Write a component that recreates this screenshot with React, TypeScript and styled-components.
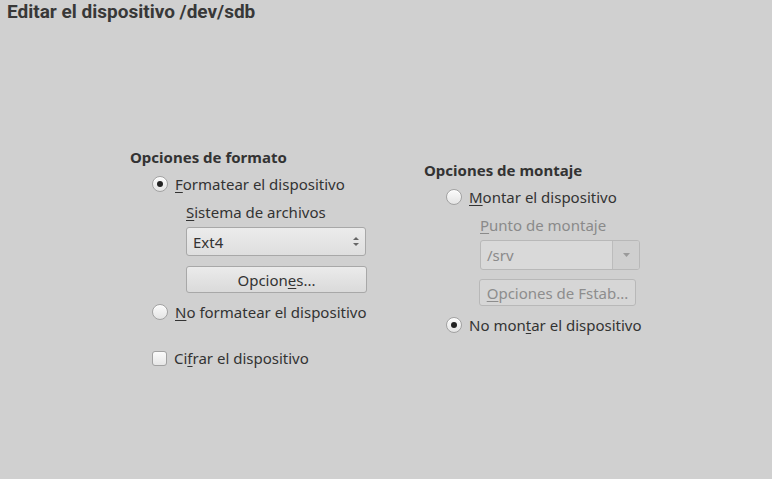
import React from "react";
import styled, { createGlobalStyle } from "styled-components";

const Global = createGlobalStyle`
  html, body { margin: 0; padding: 0; background: #d0d0d0; }
  body { font-family: "Noto Sans", "Open Sans", sans-serif; color: #333; }
`;

const Page = styled.div`
  width: 772px;
  height: 479px;
  background: #d0d0d0;
  box-sizing: border-box;
  padding: 0 7px 0;
  overflow: hidden;
`;

const Title = styled.h1`
  margin: 0;
  font-family: Roboto, "Liberation Sans", sans-serif;
  font-weight: 700;
  font-size: 19px;
  line-height: 23px;
  color: #383838;
`;

const Body = styled.div`
  display: flex;
  align-items: flex-start;
  padding-left: 123px;
  margin-top: 125px;
  gap: 58px;
`;

const Column = styled.div<{ $top: number; $width: number }>`
  display: flex;
  flex-direction: column;
  margin-top: ${(p) => p.$top}px;
  width: ${(p) => p.$width}px;
`;

const Heading = styled.div`
  font-weight: 700;
  font-size: 15px;
  line-height: 18px;
  color: #333;
  white-space: nowrap;
`;

const OptionRow = styled.label<{ $gap: number }>`
  display: flex;
  align-items: center;
  gap: 7px;
  height: 20px;
  margin-top: ${(p) => p.$gap}px;
  padding-left: 22px;
  font-size: 15px;
  color: #333;
  white-space: nowrap;
`;

const Radio = styled.span<{ $checked?: boolean }>`
  width: 14px;
  height: 14px;
  border-radius: 50%;
  border: 1px solid #a2a2a2;
  background: linear-gradient(#fbfbfb, #e4e4e4);
  box-shadow: inset 0 1px 0 #fff;
  display: flex;
  align-items: center;
  justify-content: center;
  flex: none;
  &::after {
    content: "";
    display: ${(p) => (p.$checked ? "block" : "none")};
    width: 6px;
    height: 6px;
    border-radius: 50%;
    background: #222;
  }
`;

const Check = styled.span`
  width: 13px;
  height: 13px;
  border-radius: 3px;
  border: 1px solid #a2a2a2;
  background: linear-gradient(#fbfbfb, #e6e6e6);
  flex: none;
`;

const Sub = styled.div`
  display: flex;
  flex-direction: column;
  padding-left: 56px;
`;

const SubLabel = styled.div<{ $disabled?: boolean }>`
  font-size: 15px;
  line-height: 20px;
  margin-top: 8px;
  white-space: nowrap;
  color: ${(p) => (p.$disabled ? "#8a8a8a" : "#333")};
`;

const Combo = styled.div<{ $disabled?: boolean; $h: number }>`
  display: flex;
  align-items: center;
  margin-top: 5px;
  height: ${(p) => p.$h}px;
  box-sizing: border-box;
  border: 1px solid ${(p) => (p.$disabled ? "#b8b8b8" : "#a8a8a8")};
  border-radius: 3px;
  background: ${(p) => (p.$disabled ? "#d9d9d9" : "linear-gradient(#ececec, #dedede)")};
  font-size: 15px;
  color: ${(p) => (p.$disabled ? "#8a8a8a" : "#333")};
  overflow: hidden;
`;

const ComboText = styled.span`
  flex: 1;
  padding-left: 6px;
`;

const Spinner = styled.span`
  display: flex;
  flex-direction: column;
  gap: 3px;
  padding-right: 6px;
  align-items: center;
`;

const DropSide = styled.span`
  width: 26px;
  align-self: stretch;
  display: flex;
  align-items: center;
  justify-content: center;
  border-left: 1px solid #bcbcbc;
  background: #cfcfcf;
`;

const Button = styled.div<{ $disabled?: boolean; $w: string }>`
  margin-top: ${(p) => (p.$disabled ? 9 : 10)}px;
  margin-left: ${(p) => (p.$disabled ? -1 : 0)}px;
  width: ${(p) => p.$w};
  height: 27px;
  box-sizing: border-box;
  border: 1px solid ${(p) => (p.$disabled ? "#b8b8b8" : "#a8a8a8")};
  border-radius: 3px;
  background: ${(p) => (p.$disabled ? "#d6d6d6" : "linear-gradient(#ebebeb, #dadada)")};
  display: flex;
  align-items: center;
  justify-content: center;
  font-size: 15px;
  white-space: nowrap;
  color: ${(p) => (p.$disabled ? "#8d8d8d" : "#333")};
`;

const U = styled.span`
  text-decoration: underline;
  text-underline-offset: 2px;
`;

const Up = () => (
  <svg width="6" height="3" viewBox="0 0 6 3">
    <path d="M0 3 L3 0 L6 3 Z" fill="#666" />
  </svg>
);
const Down = ({ c = "#666", w = 6, h = 3 }: { c?: string; w?: number; h?: number }) => (
  <svg width={w} height={h} viewBox={`0 0 ${w} ${h}`}>
    <path d={`M0 0 L${w} 0 L${w / 2} ${h} Z`} fill={c} />
  </svg>
);

export default function App() {
  return (
    <Page>
      <Global />
      <Title>Editar el dispositivo /dev/sdb</Title>
      <Body>
        <Column $top={0} $width={236}>
          <Heading>Opciones de formato</Heading>
          <OptionRow $gap={8}>
            <Radio $checked />
            <span>
              <U>F</U>ormatear el dispositivo
            </span>
          </OptionRow>
          <Sub>
            <SubLabel>
              <U>S</U>istema de archivos
            </SubLabel>
            <Combo $h={29}>
              <ComboText>Ext4</ComboText>
              <Spinner>
                <Up />
                <Down />
              </Spinner>
            </Combo>
            <Button $w="181px">
              <span>
                Opcion<U>e</U>s...
              </span>
            </Button>
          </Sub>
          <OptionRow $gap={9}>
            <Radio />
            <span>
              <U>N</U>o formatear el dispositivo
            </span>
          </OptionRow>
          <OptionRow $gap={26}>
            <Check />
            <span>
              Ci<U>f</U>rar el dispositivo
            </span>
          </OptionRow>
        </Column>
        <Column $top={13} $width={216}>
          <Heading>Opciones de montaje</Heading>
          <OptionRow $gap={8}>
            <Radio />
            <span>
              <U>M</U>ontar el dispositivo
            </span>
          </OptionRow>
          <Sub>
            <SubLabel $disabled>
              <U>P</U>unto de montaje
            </SubLabel>
            <Combo $disabled $h={30}>
              <ComboText>/srv</ComboText>
              <DropSide>
                <Down c="#9a9a9a" w={7} h={4} />
              </DropSide>
            </Combo>
            <Button $disabled $w="157px">
              <span>
                <U>O</U>pciones de Fstab...
              </span>
            </Button>
          </Sub>
          <OptionRow $gap={9}>
            <Radio $checked />
            <span>
              No mon<U>t</U>ar el dispositivo
            </span>
          </OptionRow>
        </Column>
      </Body>
    </Page>
  );
}
